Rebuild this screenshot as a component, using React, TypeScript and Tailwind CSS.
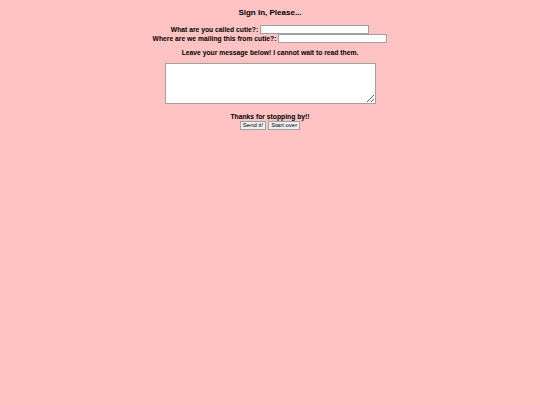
export default function App() {
  return (
    <div className="min-h-screen w-full bg-[#ffc3c3] text-black font-['Liberation_Sans',Arial,sans-serif]">
      <div className="flex flex-col items-center pt-[8px]">
        <h3 className="text-[8px] font-bold leading-[10px]">Sign In, Please...</h3>

        <form className="mt-[7px] flex flex-col items-center text-[6.75px] font-bold leading-[9px]">
          <label className="flex items-center gap-[2px]">
            <span>What are you called cutie?:</span>
            <input type="text" className="h-[9px] w-[109px] border border-[#a0a0a0] bg-white" />
          </label>
          <label className="flex items-center gap-[2px]">
            <span>Where are we mailing this from cutie?:</span>
            <input type="text" className="h-[9px] w-[109px] border border-[#a0a0a0] bg-white" />
          </label>

          <p className="mt-[5px]">Leave your message below! I cannot wait to read them.</p>

          <textarea className="mt-[6px] h-[41px] w-[211px] resize border border-[#a0a0a0] bg-white" />

          <p className="mt-[8px]">Thanks for stopping by!!</p>
          <div className="flex gap-[2px]">
            <button type="button" className="h-[9px] border border-[#a0a0a0] bg-[#f0f0f0] px-[2px] text-[6px] font-normal leading-[7px]">
              Send it!
            </button>
            <button type="button" className="h-[9px] border border-[#a0a0a0] bg-[#f0f0f0] px-[2px] text-[6px] font-normal leading-[7px]">
              Start over
            </button>
          </div>
        </form>
      </div>
    </div>
  );
}
